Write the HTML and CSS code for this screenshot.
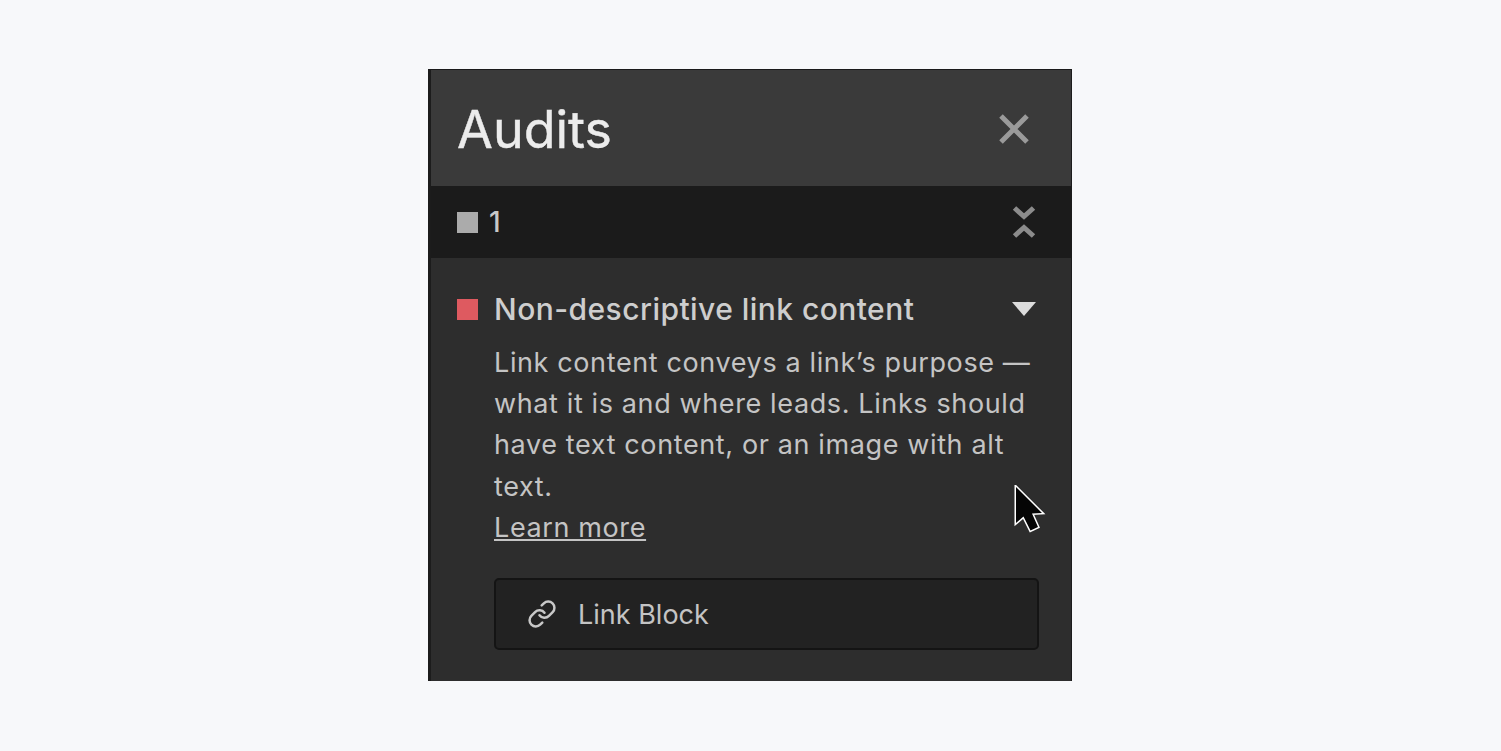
FILE: index.html
```html
<!DOCTYPE html>
<html lang="en">
<head>
    <meta charset="UTF-8">
    <title>Audits</title>
    <link rel="stylesheet" href="styles.css">
</head>
<body>

    <div class="panel">
        <!-- Header -->
        <div class="header">
            <h1>Audits</h1>
            <svg class="close" width="32" height="32" viewBox="0 0 32 32">
                <path d="M3 3 L29 29 M29 3 L3 29" stroke="#9a9a9a" stroke-width="5" fill="none"/>
            </svg>
        </div>

        <!-- Count bar -->
        <div class="countbar">
            <span class="square grey"></span>
            <span class="count">1</span>
            <svg class="collapse" width="24" height="34" viewBox="0 0 24 34">
                <path d="M2.5 3 L12 11.5 L21.5 3 M2.5 31 L12 22.5 L21.5 31" stroke="#8c8c8c" stroke-width="5" fill="none"/>
            </svg>
        </div>

        <!-- Audit item -->
        <div class="item">
            <div class="item-title">
                <span class="square red"></span>
                <span class="title-text">Non-descriptive link content</span>
                <span class="caret"></span>
            </div>
            <div class="item-body">
                <p>Link content conveys a link’s purpose — what it is and where leads. Links should have text content, or an image with alt text.<br><a href="#">Learn more</a></p>
                <div class="element">
                    <svg width="30" height="30" viewBox="0 0 24 24" fill="none" stroke="#c8c8c8" stroke-width="2" stroke-linecap="round">
                        <path d="M10 13a5 5 0 0 0 7.54.54l3-3a5 5 0 0 0-7.07-7.07l-1.72 1.71"/>
                        <path d="M14 11a5 5 0 0 0-7.54-.54l-3 3a5 5 0 0 0 7.07 7.07l1.71-1.71"/>
                    </svg>
                    <span>Link Block</span>
                </div>
            </div>
        </div>

        <!-- Mouse pointer -->
        <svg class="pointer" width="34" height="50" viewBox="0 0 34 50">
            <path class="arrow" d="M2 2 L2 38 L9.5 31.5 L16.5 45.5 L24 42 L18 28.5 L28 28 Z"/>
        </svg>
    </div>

</body>
</html>
```

FILE: styles.css
```css
* {
    box-sizing: border-box;
    margin: 0;
    padding: 0;
}
body {
    background-color: #f7f8fa;
    font-family: Inter, "Liberation Sans", sans-serif;
    height: 751px;
    overflow: hidden;
    padding-top: 69px;
}
.panel {
    position: relative;
    width: 644px;
    height: 612px;
    margin-left: 428px;
    background: #2d2d2d;
    border-top: 1px solid #1a1a1a;
    border-left: 3px solid #1c1c1c;
    border-right: 1px solid #1c1c1c;
}
.header {
    height: 116px;
    background: #3a3a3a;
    display: flex;
    align-items: center;
    justify-content: space-between;
    padding: 2px 41px 0 26px;
}
h1 {
    font-size: 52px;
    font-weight: 400;
    -webkit-text-stroke: 0.4px #ececec;
    color: #ececec;
}
.countbar {
    height: 72px;
    background: #1b1b1b;
    display: flex;
    align-items: center;
    padding: 0 35px 0 26px;
}
.square {
    display: block;
    width: 21px;
    height: 21px;
    flex-shrink: 0;
}
.grey {
    background: #ababab;
}
.red {
    background: #de5a60;
}
.count {
    margin-left: 11px;
    font-size: 28px;
    font-weight: 500;
    color: #c8c8c8;
    flex: 1;
}
.item {
    padding: 28px 32px 0 26px;
}
.item-title {
    display: flex;
    align-items: center;
    height: 46px;
}
.title-text {
    flex: 1;
    margin-left: 16px;
    font-size: 30px;
    font-weight: 500;
    letter-spacing: 0.45px;
    color: #cecece;
}
.caret {
    width: 0;
    height: 0;
    margin-right: 3px;
    border-left: 12px solid transparent;
    border-right: 12px solid transparent;
    border-top: 14px solid #dcdcdc;
}
.item-body {
    padding-left: 37px;
}
.item-body p {
    font-size: 27px;
    line-height: 41.2px;
    letter-spacing: 0.62px;
    color: #c4c4c4;
    margin-top: 10px;
}
.item-body a {
    color: #c4c4c4;
}
.element {
    margin-top: 30px;
    height: 72px;
    background: #222222;
    border: 2px solid #141414;
    border-radius: 5px;
    display: flex;
    align-items: center;
    padding-left: 31px;
    gap: 21px;
    font-size: 27px;
    color: #c4c4c4;
}
.pointer {
    position: absolute;
    left: 583px;
    top: 415px;
}
.arrow {
    fill: #050505;
    stroke: #ffffff;
    stroke-width: 3;
    paint-order: stroke;
}
```
